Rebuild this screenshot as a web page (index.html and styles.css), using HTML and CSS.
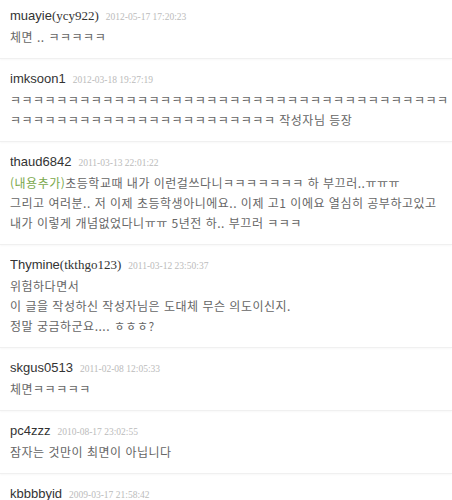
FILE: index.html
```
<!DOCTYPE html>
<html lang="ko">

<head>
    <meta charset="UTF-8">
    <meta name="viewport" content="width=device-width, initial-scale=1.0">
    <title>댓글</title>
    <link rel="stylesheet" href="styles.css">
</head>

<body>
    <ul class="comments">
        <li class="item">
            <div class="head"><span class="name">muayie<span class="uid">(ycy922)</span></span><span class="date">2012-05-17 17:20:23</span></div>
            <p class="text">체면 .. ㅋㅋㅋㅋㅋ</p>
        </li>
        <li class="item">
            <div class="head"><span class="name">imksoon1</span><span class="date">2012-03-18 19:27:19</span></div>
            <p class="text">ㅋㅋㅋㅋㅋㅋㅋㅋㅋㅋㅋㅋㅋㅋㅋㅋㅋㅋㅋㅋㅋㅋㅋㅋㅋㅋㅋㅋㅋㅋㅋㅋㅋㅋㅋㅋㅋㅋㅋㅋㅋㅋㅋㅋㅋㅋㅋㅋㅋㅋㅋㅋㅋㅋㅋㅋㅋㅋㅋㅋㅋ 작성자님 등장</p>
        </li>
        <li class="item">
            <div class="head"><span class="name">thaud6842</span><span class="date">2011-03-13 22:01:22</span></div>
            <p class="text"><span class="add">(내용추가)</span>초등학교때 내가 이런걸쓰다니ㅋㅋㅋㅋㅋㅋㅋ 하 부끄러..ㅠㅠㅠ<br>그리고 여러분.. 저 이제 초등학생아니에요.. 이제 고1 이에요 열심히 공부하고있고<br>내가 이렇게 개념없었다니ㅠㅠ 5년전 하.. 부끄러 ㅋㅋㅋ</p>
        </li>
        <li class="item">
            <div class="head"><span class="name">Thymine<span class="uid">(tkthgo123)</span></span><span class="date">2011-03-12 23:50:37</span></div>
            <p class="text">위험하다면서<br>이 글을 작성하신 작성자님은 도대체 무슨 의도이신지.<br>정말 궁금하군요.... ㅎㅎㅎ?</p>
        </li>
        <li class="item">
            <div class="head"><span class="name">skgus0513</span><span class="date">2011-02-08 12:05:33</span></div>
            <p class="text">체면ㅋㅋㅋㅋㅋ</p>
        </li>
        <li class="item">
            <div class="head"><span class="name">pc4zzz</span><span class="date">2010-08-17 23:02:55</span></div>
            <p class="text">잠자는 것만이 최면이 아닙니다</p>
        </li>
        <li class="item">
            <div class="head"><span class="name">kbbbbyid</span><span class="date">2009-03-17 21:58:42</span></div>
            <p class="text">ㅋㅋㅋ</p>
        </li>
    </ul>
</body>

</html>
```

FILE: styles.css
```
* {
    margin: 0;
    padding: 0;
}

body {
    background-color: #fff;
    font-family: "Liberation Sans", "Noto Sans CJK KR", sans-serif;
}

ul {
    list-style: none;
}

.item {
    padding: 10px 0 11px 10px;
    border-bottom: 1px solid #f0f0f0;
    box-shadow: 0 1px 2px rgba(0, 0, 0, 0.03);
}

/* 첫 댓글은 위가 살짝 잘려 있음 */
.item:first-child {
    padding-top: 6px;
}

.head {
    display: flex;
    align-items: baseline;
    gap: 7px;
    height: 20px;
    line-height: 20px;
    overflow: hidden;
}

.name {
    font-size: 13px;
    color: #333;
}

.uid {
    font-family: "Liberation Serif", serif;
}

.date {
    font-family: "Liberation Serif", serif;
    font-size: 9.5px;
    line-height: 1;
    color: #bbb;
}

.text {
    margin-top: 1px;
    font-family: "Noto Sans CJK KR", sans-serif;
    font-size: 12px;
    line-height: 20px;
    letter-spacing: 0.5px;
    color: #666;
    word-break: break-all;
}

.add {
    color: #79a84b;
}
```
